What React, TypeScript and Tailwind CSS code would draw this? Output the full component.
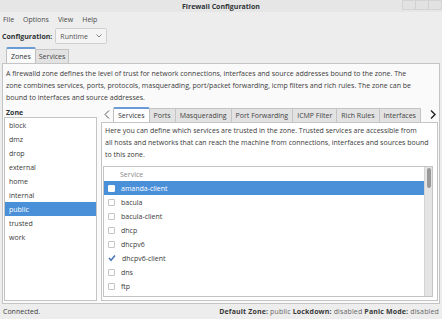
import React from "react";

const zones = ["block", "dmz", "drop", "external", "home", "internal", "public", "trusted", "work"];
const services: { name: string; checked?: boolean; selected?: boolean }[] = [
  { name: "amanda-client", selected: true },
  { name: "bacula" },
  { name: "bacula-client" },
  { name: "dhcp" },
  { name: "dhcpv6" },
  { name: "dhcpv6-client", checked: true },
  { name: "dns" },
  { name: "ftp" },
  { name: "high-availability" },
];
const tabs = ["Services", "Ports", "Masquerading", "Port Forwarding", "ICMP Filter", "Rich Rules", "Interfaces"];

function Check({ checked, selected }: { checked?: boolean; selected?: boolean }) {
  if (checked) {
    return (
      <svg width="8" height="8" viewBox="0 0 8 8" className="shrink-0">
        <path d="M1 4 L3 6.2 L7 1.5" fill="none" stroke="#4a78b8" strokeWidth="1.6" />
      </svg>
    );
  }
  return (
    <div
      className={
        "w-[7px] h-[7px] shrink-0 rounded-[1px] border " +
        (selected ? "bg-white border-white" : "bg-white border-[#c4c4c4]")
      }
    />
  );
}

export default function App() {
  return (
    <div
      className="w-[442px] h-[319px] bg-[#ededed] text-[#2e3436] flex flex-col overflow-hidden text-[7px] leading-none"
      style={{ fontFamily: '"Open Sans", "DejaVu Sans", sans-serif' }}
    >
      {/* title bar */}
      <div className="h-[12px] relative flex items-center justify-center bg-[#e6e6e6]">
        <span className="font-bold text-[7px] text-[#2e3436]">Firewall Configuration</span>
        <div className="absolute right-0 top-0 h-[10px] w-[40px] flex border border-[#d4d4d4] bg-[#e2e2e2]">
          <div className="flex-1 border-r border-[#d0d0d0]" />
          <div className="flex-1 border-r border-[#d0d0d0]" />
          <div className="flex-1" />
        </div>
      </div>
      {/* menu */}
      <div className="h-[14px] flex items-center gap-[9px] px-[3px] text-[#4a4a4a]">
        <span>File</span>
        <span>Options</span>
        <span>View</span>
        <span>Help</span>
      </div>
      {/* configuration */}
      <div className="h-[20px] flex items-center px-[2px] gap-[3px]">
        <span className="font-bold">Configuration:</span>
        <div className="w-[52px] h-[16px] border border-[#cfcfcf] rounded-[2px] bg-[#f4f4f4] flex items-center justify-between px-[4px] text-[#555]">
          <span>Runtime</span>
          <svg width="6" height="4" viewBox="0 0 6 4">
            <path d="M0.5 0.5 L3 3 L5.5 0.5" fill="none" stroke="#777" strokeWidth="0.9" />
          </svg>
        </div>
      </div>
      {/* outer tabs */}
      <div className="h-[16px] flex items-end pl-[6px] mt-[1px]">
        <div className="h-[16px] px-[4px] flex items-center bg-[#fafafa] border border-b-0 border-[#bfbfbf] border-t-[#6b9bd4] border-t-2 rounded-t-[2px]">
          Zones
        </div>
        <div className="h-[14px] px-[3px] flex items-center bg-[#e2e2e2] border border-b-0 border-l-0 border-[#c4c4c4] text-[#444]">
          Services
        </div>
      </div>
      {/* outer panel */}
      <div className="flex-1 mx-[2px] bg-[#fafafa] border border-[#c4c4c4] flex flex-col min-h-0">
        <div className="px-[3px] pt-[4px] leading-[12px] text-[#3a3a3a]">
          A firewalld zone defines the level of trust for network connections, interfaces and source addresses bound to the zone. The
          <br />
          zone combines services, ports, protocols, masquerading, port/packet forwarding, icmp filters and rich rules. The zone can be
          <br />
          bound to interfaces and source addresses.
        </div>
        <div className="flex flex-1 min-h-0 mt-[3px] pb-[2px]">
          {/* zone column */}
          <div className="w-[93px] flex flex-col ml-[1px]">
            <div className="h-[10px] flex items-center px-[2px] font-bold">Zone</div>
            <div className="flex-1 bg-white border border-[#c4c4c4]">
              {zones.map((z) => (
                <div
                  key={z}
                  className={
                    "h-[14px] flex items-center px-[4px] " +
                    (z === "public" ? "bg-[#4a90d9] text-white" : "text-[#3a3a3a]")
                  }
                >
                  {z}
                </div>
              ))}
            </div>
          </div>
          {/* right column */}
          <div className="flex-1 flex flex-col ml-[4px] mr-[1px] min-w-0">
            <div className="h-[15px] flex items-end">
              <div className="w-[12px] h-[15px] flex items-center justify-center">
                <svg width="6" height="9" viewBox="0 0 6 9">
                  <path d="M5 0.5 L1 4.5 L5 8.5" fill="none" stroke="#555" strokeWidth="1" />
                </svg>
              </div>
              {tabs.map((t, i) => (
                <div
                  key={t}
                  className={
                    i === 0
                      ? "h-[15px] px-[4px] flex items-center bg-white border border-b-0 border-[#bfbfbf] border-t-[#6b9bd4] border-t-2 rounded-t-[2px]"
                      : "h-[14px] px-[4px] flex items-center bg-[#e2e2e2] border border-b-0 border-l-0 border-[#c4c4c4] text-[#444] whitespace-nowrap"
                  }
                >
                  {t}
                </div>
              ))}
              <div className="flex-1 h-[15px] flex items-center justify-end pr-[2px]">
                <svg width="6" height="9" viewBox="0 0 6 9">
                  <path d="M1 0.5 L5 4.5 L1 8.5" fill="none" stroke="#222" strokeWidth="1.4" />
                </svg>
              </div>
            </div>
            <div className="flex-1 bg-white border border-[#c4c4c4] flex flex-col min-h-0 pb-[3px]">
              <div className="px-[3px] pt-[2px] leading-[12px] text-[#3a3a3a]">
                Here you can define which services are trusted in the zone. Trusted services are accessible from
                <br />
                all hosts and networks that can reach the machine from connections, interfaces and sources bound
                <br />
                to this zone.
              </div>
              <div className="flex-1 mt-[5px] mx-[1px] mr-[4px] border border-[#c4c4c4] flex min-h-0 overflow-hidden">
                <div className="flex-1 flex flex-col min-w-0">
                  <div className="h-[14px] shrink-0 flex items-center pl-[16px] text-[#888]">Service</div>
                  {services.map((s) => (
                    <div
                      key={s.name}
                      className={
                        "h-[14px] shrink-0 flex items-center gap-[6px] pl-[4px] " +
                        (s.selected ? "bg-[#4a90d9] text-white" : "text-[#3a3a3a]")
                      }
                    >
                      <Check checked={s.checked} selected={s.selected} />
                      <span>{s.name}</span>
                    </div>
                  ))}
                </div>
                <div className="w-[8px] bg-[#e4e4e4] border-l border-[#d4d4d4] flex flex-col items-center pt-[1px]">
                  <div className="w-[4px] h-[20px] bg-[#9a9a9a] rounded-[2px]" />
                </div>
              </div>
            </div>
          </div>
        </div>
      </div>
      {/* status bar */}
      <div className="h-[15px] flex items-center justify-between px-[3px] text-[#3a3a3a]">
        <span>Connected.</span>
        <span className="whitespace-nowrap tracking-[0.15px]">
          <b>Default Zone:</b> <span className="text-[#666]">public</span> <b>Lockdown:</b>{" "}
          <span className="text-[#666]">disabled</span> <b>Panic Mode:</b>{" "}
          <span className="text-[#666]">disabled</span>
        </span>
      </div>
    </div>
  );
}
